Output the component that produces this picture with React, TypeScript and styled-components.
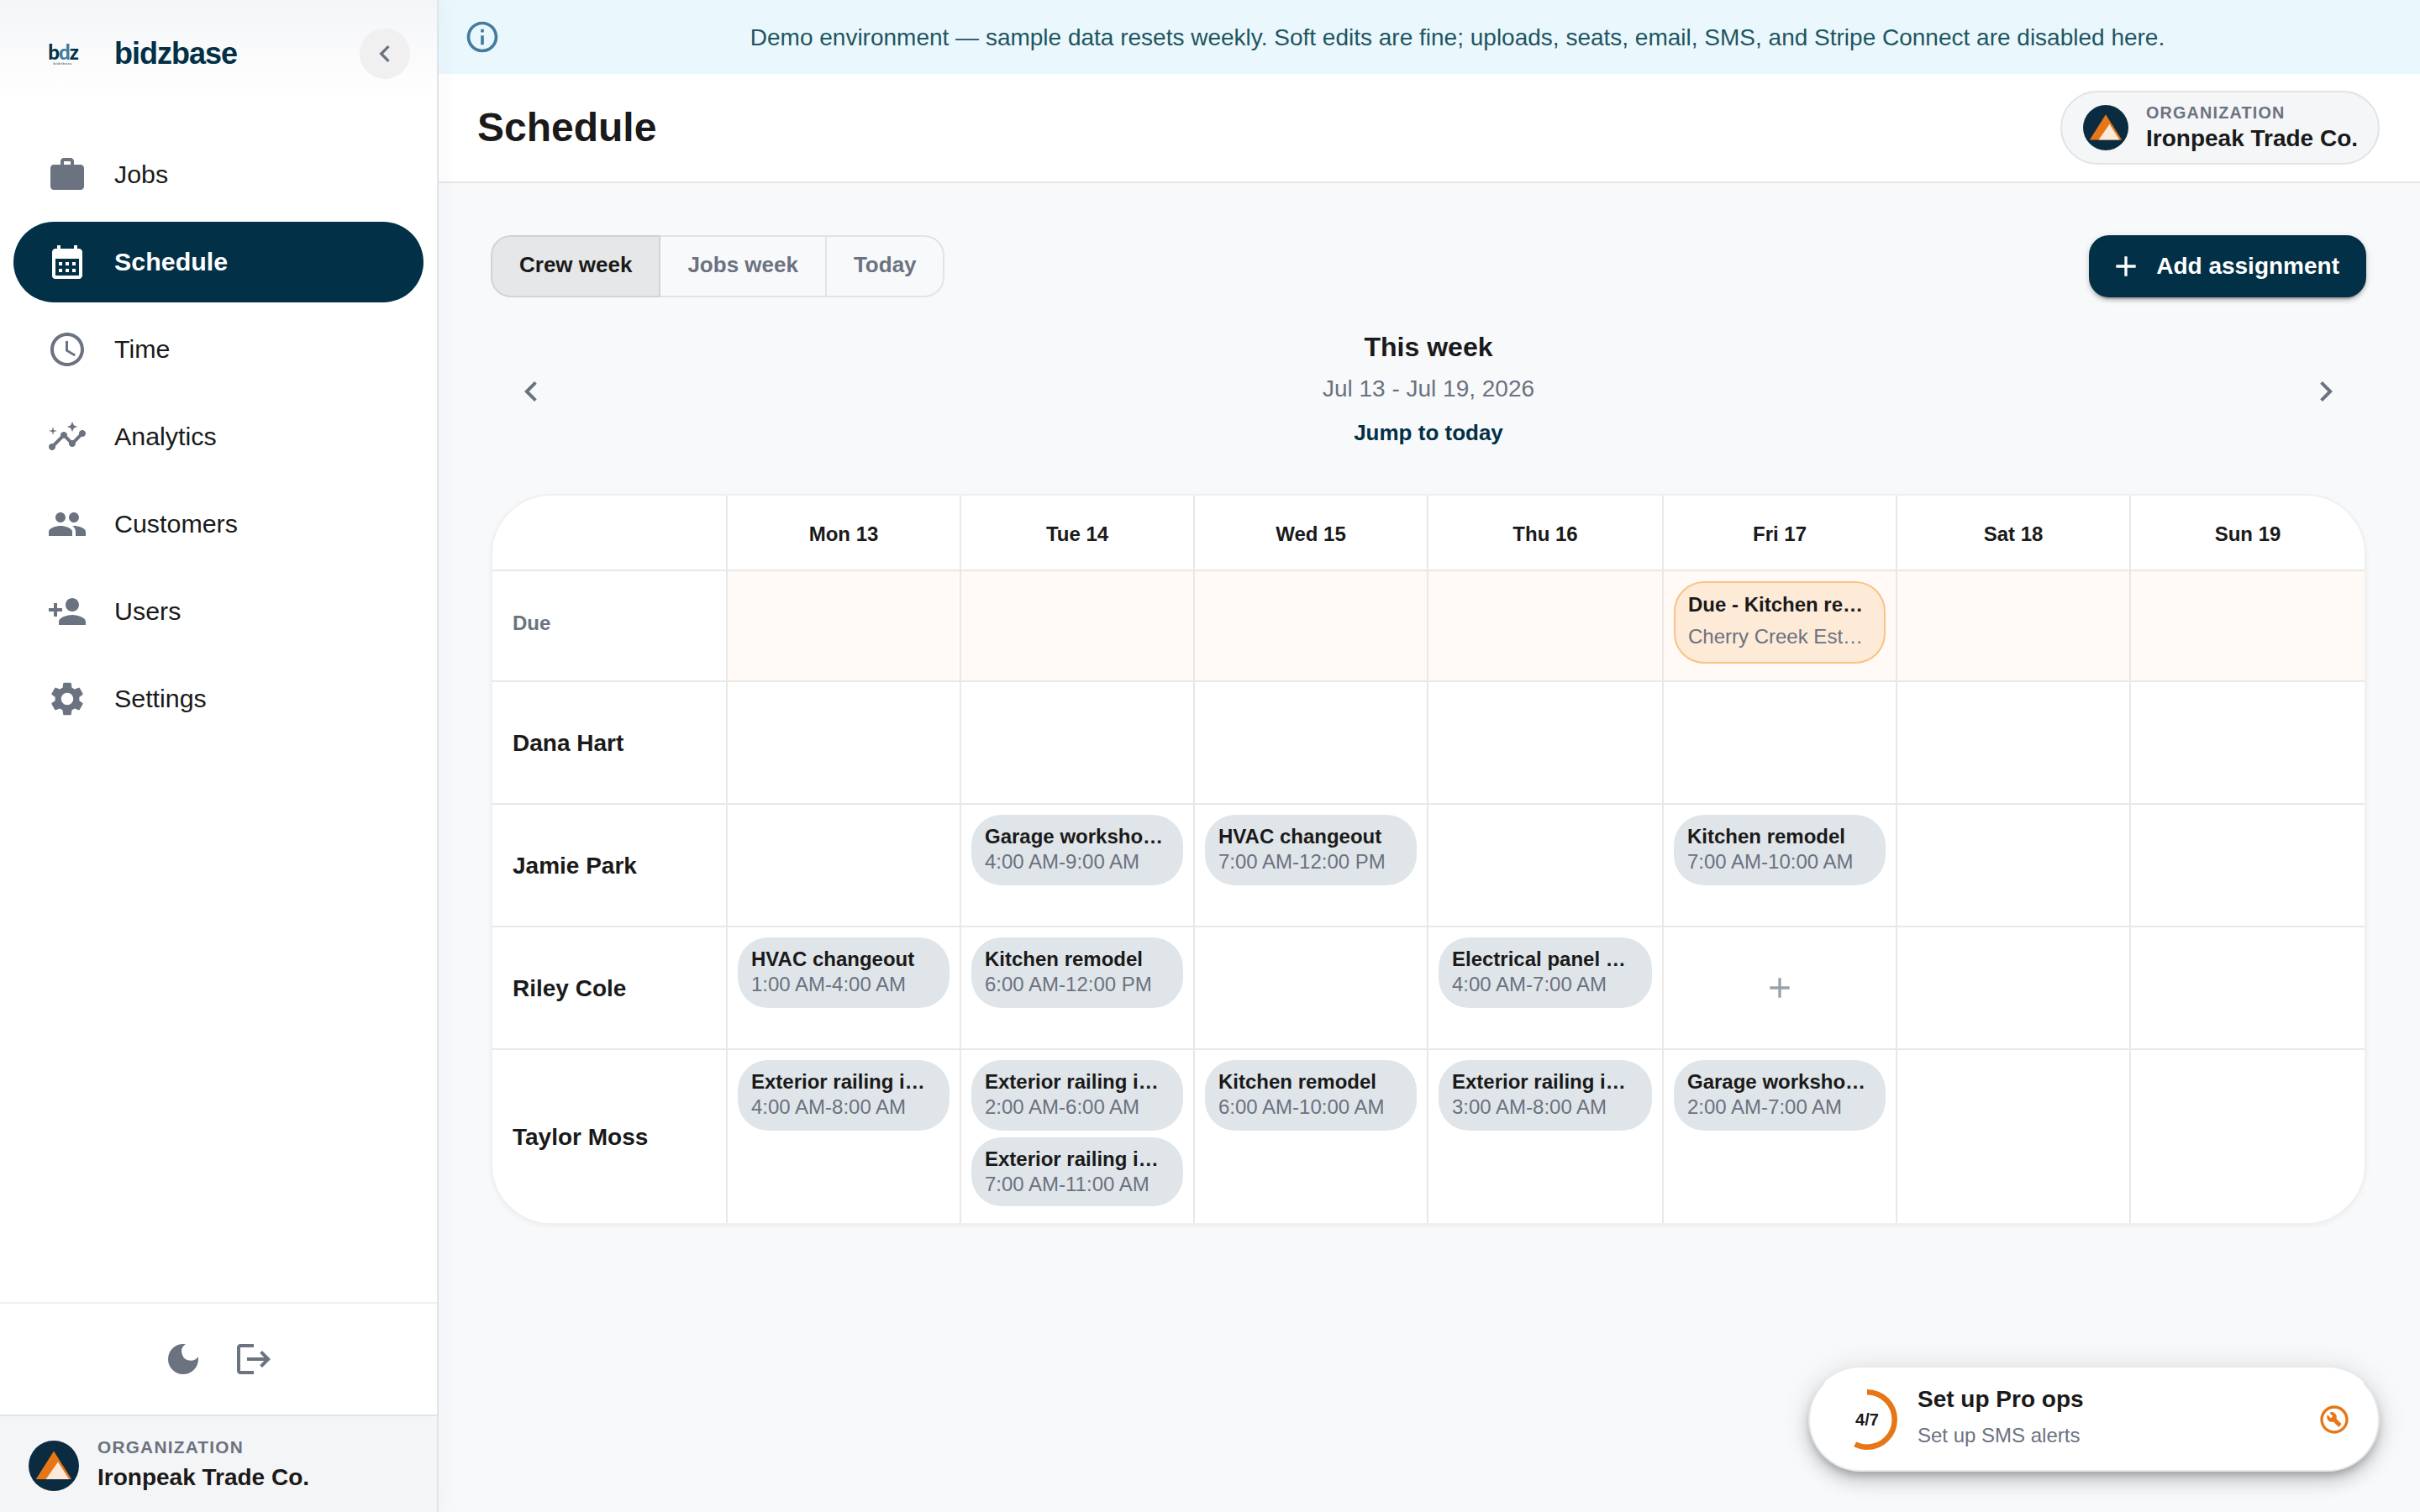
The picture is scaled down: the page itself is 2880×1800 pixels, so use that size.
import React from "react";
import styled, { createGlobalStyle, css } from "styled-components";
import {
  MdAdd,
  MdCalendarMonth,
  MdChevronLeft,
  MdChevronRight,
  MdDarkMode,
  MdInsights,
  MdOutlineBuildCircle,
  MdPeople,
  MdPersonAdd,
  MdSettings,
  MdWork,
} from "react-icons/md";

const colors = {
  primary: "#023047",
  text: "#1a1a1a",
  muted: "#6b7280",
  accent: "#e67616",
  border: "#e0e4e8",
  line: "#e8e8e8",
  page: "#f8f9fb",
  chip: "#e0e5e9",
};

const GlobalStyle = createGlobalStyle`
  *, *::before, *::after {
    box-sizing: border-box;
  }
  body {
    margin: 0;
    background: ${colors.page};
    color: ${colors.text};
    font-family: "Liberation Sans", Arial, sans-serif;
    font-size: 28px;
    line-height: 1;
  }
  button {
    font: inherit;
    color: inherit;
    background: none;
    border: 0;
    padding: 0;
  }
  svg {
    display: block;
    flex: none;
  }
`;

const Layout = styled.div`
  display: flex;
  width: 2880px;
  height: 1800px;
  overflow: hidden;
`;

/* ---------- sidebar ---------- */

const Sidebar = styled.aside`
  display: flex;
  flex-direction: column;
  flex: none;
  width: 522px;
  border-right: 2px solid ${colors.border};
  background: #fff;
  box-shadow: 4px 0 24px rgba(2, 48, 71, 0.04);
  z-index: 1;
`;

const Brand = styled.div`
  display: flex;
  align-items: center;
  height: 128px;
  padding: 0 32px 0 54px;
  background: linear-gradient(180deg, #f4f5f7 0%, #fff 92%);
`;

const BrandMark = styled.div`
  display: flex;
  flex-direction: column;
  align-items: center;
  width: 42px;
  margin-right: 40px;
  font-family: Lato, sans-serif;
  color: ${colors.primary};
`;

const BrandLetters = styled.span`
  font-size: 24px;
  font-weight: 900;
  line-height: 22px;
  letter-spacing: -1px;
  em {
    font-style: normal;
    color: #457b9d;
  }
`;

const BrandCaption = styled.span`
  font-size: 4.5px;
  line-height: 5px;
  letter-spacing: 0.7px;
`;

const BrandName = styled.span`
  flex: 1;
  font-size: 36px;
  font-weight: 700;
  letter-spacing: -1px;
  color: ${colors.primary};
`;

const CollapseButton = styled.button`
  display: flex;
  align-items: center;
  justify-content: center;
  width: 60px;
  height: 60px;
  border-radius: 50%;
  background: #f0f0f1;
  color: ${colors.muted};
  font-size: 40px;
`;

const Nav = styled.nav`
  display: flex;
  flex-direction: column;
  gap: 8px;
  flex: 1;
  padding: 32px 16px;
`;

const NavItem = styled.a<{ $active?: boolean }>`
  display: flex;
  align-items: center;
  gap: 32px;
  height: 96px;
  padding: 0 40px;
  border-radius: 48px;
  font-size: 30.4px;
  color: ${colors.text};
  svg {
    font-size: 48px;
    color: ${colors.muted};
  }
  ${(props) =>
    props.$active &&
    css`
      background: ${colors.primary};
      color: #fff;
      font-weight: 700;
      svg {
        color: #fff;
      }
    `}
`;

const NavLabel = styled.span`
  padding-bottom: 2px;
`;

const SidebarActions = styled.div`
  display: flex;
  align-items: center;
  justify-content: center;
  gap: 36px;
  height: 134px;
  border-top: 2px solid #f0f0f0;
  color: ${colors.muted};
  font-size: 48px;
`;

const SidebarOrg = styled.div`
  display: flex;
  align-items: center;
  gap: 22px;
  height: 116px;
  padding: 4px 34px 0;
  border-top: 2px solid ${colors.border};
  background: #f4f5f6;
`;

const OrgText = styled.div<{ $lift?: number }>`
  display: flex;
  flex-direction: column;
  padding-bottom: ${(props) => props.$lift || 0}px;
`;

const OrgLabel = styled.span<{ $size: number }>`
  font-size: ${(props) => props.$size}px;
  font-weight: 700;
  letter-spacing: 0.06em;
  color: ${colors.muted};
`;

const OrgName = styled.span<{ $gap: number }>`
  margin-top: ${(props) => props.$gap}px;
  font-size: 28px;
  font-weight: 700;
  white-space: nowrap;
`;

/* ---------- top area ---------- */

const Main = styled.main`
  display: flex;
  flex-direction: column;
  flex: 1;
  min-width: 0;
`;

const Banner = styled.div`
  display: flex;
  align-items: center;
  height: 88px;
  padding: 0 32px 0 30px;
  background: #eaf8fd;
  color: #1f5561;
`;

const BannerText = styled.p`
  flex: 1;
  margin: 0;
  padding: 2px 0 0 25px;
  text-align: center;
  font-size: 28px;
`;

const Header = styled.header`
  display: flex;
  align-items: center;
  justify-content: space-between;
  height: 130px;
  padding: 0 48px 0 46px;
  border-bottom: 2px solid ${colors.line};
  background: #fff;
`;

const PageTitle = styled.h1`
  margin: 0;
  font-size: 48px;
  font-weight: 700;
`;

const OrgChip = styled.div`
  display: flex;
  align-items: center;
  gap: 21px;
  width: 380px;
  height: 88px;
  padding: 0 24px 0 25px;
  border: 2px solid ${colors.border};
  border-radius: 44px;
  background: #f4f6f7;
`;

const Content = styled.section`
  padding: 62px 64px 0 62px;
`;

const Toolbar = styled.div`
  display: flex;
  align-items: center;
  justify-content: space-between;
`;

const Tabs = styled.div`
  display: flex;
  height: 74px;
`;

const Tab = styled.button<{ $active?: boolean }>`
  padding: 0 32px 5px;
  border: 2px solid ${(props) => (props.$active ? "#d0d4d7" : colors.border)};
  background: ${(props) => (props.$active ? "#e6e7e8" : "transparent")};
  color: ${(props) => (props.$active ? colors.text : colors.muted)};
  font-size: 26px;
  font-weight: 700;
  &:not(:first-child) {
    border-left: 0;
  }
  &:first-child {
    border-radius: 24px 0 0 24px;
  }
  &:last-child {
    padding-right: 31px;
    border-radius: 0 24px 24px 0;
  }
`;

const AddButton = styled.button`
  display: flex;
  align-items: center;
  gap: 16px;
  height: 74px;
  padding: 0 32px 0 24px;
  border-radius: 24px;
  background: ${colors.primary};
  color: #fff;
  font-size: 28px;
  font-weight: 700;
  box-shadow: 0 6px 2px -4px rgba(0, 0, 0, 0.2),
    0 4px 4px 0 rgba(0, 0, 0, 0.14), 0 2px 10px 0 rgba(0, 0, 0, 0.12);
  svg {
    font-size: 40px;
  }
`;

const WeekNav = styled.div`
  display: flex;
  align-items: center;
  justify-content: space-between;
  height: 156px;
  margin: 34px 0 44px;
  padding: 0 24px;
  color: ${colors.muted};
  font-size: 48px;
`;

const WeekInfo = styled.div`
  display: flex;
  flex-direction: column;
  align-items: center;
  padding-bottom: 2px;
`;

const WeekTitle = styled.h2`
  margin: 0;
  font-size: 32px;
  line-height: 48px;
  font-weight: 700;
  color: ${colors.text};
`;

const WeekRange = styled.span`
  font-size: 28px;
  line-height: 52px;
`;

const JumpLink = styled.button`
  color: ${colors.primary};
  font-size: 26px;
  line-height: 52px;
  font-weight: 700;
`;

/* ---------- week board ---------- */

const Board = styled.div`
  overflow: hidden;
  border: 2px solid #f0f0f0;
  border-radius: 72px;
  background: #fff;
  box-shadow: 0 2px 6px rgba(0, 0, 0, 0.05);
`;

const Row = styled.div<{ $height: number }>`
  display: grid;
  grid-template-columns: 280px 278px 278px 278px 280px 278px 278px 278px;
  height: ${(props) => props.$height}px;
  &:not(:last-child) {
    border-bottom: 2px solid ${colors.line};
  }
`;

const Cell = styled.div<{ $tint?: boolean }>`
  display: flex;
  flex-direction: column;
  gap: 8px;
  min-width: 0;
  padding: 12px;
  background: ${(props) => (props.$tint ? "#fffaf5" : "transparent")};
  &:not(:last-child) {
    border-right: 2px solid ${colors.line};
  }
`;

const DayCell = styled(Cell)`
  align-items: center;
  justify-content: center;
  padding: 4px 0 0;
  font-size: 24px;
  font-weight: 700;
`;

const RowLabel = styled(Cell)<{ $muted?: boolean }>`
  justify-content: center;
  padding: ${(props) => (props.$muted ? "0 24px 6px" : "2px 24px 0")};
  font-size: ${(props) => (props.$muted ? 24 : 28)}px;
  font-weight: 700;
  color: ${(props) => (props.$muted ? colors.muted : colors.text)};
`;

const EventCard = styled.div`
  height: 84px;
  padding: 11px 16px 0;
  border-radius: 36px;
  background: ${colors.chip};
  font-size: 24px;
  line-height: 30px;
  white-space: nowrap;
  & + & {
    height: 82px;
  }
`;

const DueCard = styled(EventCard)`
  height: 98px;
  padding: 7px 15px 0;
  border: 2px solid #fbc188;
  background: #fdead7;
  line-height: 38px;
`;

const EventTitle = styled.div`
  font-weight: 700;
`;

const EventMeta = styled.div`
  color: ${colors.muted};
`;

const AddSlot = styled.button`
  display: flex;
  align-items: center;
  justify-content: center;
  flex: 1;
  color: #99a2a8;
  font-size: 40px;
`;

/* ---------- setup widget, floats over the page ---------- */

const SetupWidget = styled.div`
  position: absolute;
  top: 1628px;
  left: 2152px;
  display: flex;
  align-items: center;
  width: 680px;
  height: 124px;
  padding: 0 32px;
  border: 2px solid #e6e8ea;
  border-top-color: #fff;
  border-radius: 62px;
  background: #fff;
  box-shadow: 0 6px 10px -2px rgba(0, 0, 0, 0.2),
    0 12px 20px 0 rgba(0, 0, 0, 0.14), 0 2px 36px 0 rgba(0, 0, 0, 0.12);
`;

const Ring = styled.div`
  display: grid;
  place-items: center;
  width: 72px;
  height: 72px;
  > * {
    grid-area: 1 / 1;
  }
`;

const RingText = styled.span`
  font-size: 20px;
  font-weight: 700;
`;

const SetupText = styled.div`
  display: flex;
  flex-direction: column;
  flex: 1;
  margin-left: 24px;
  padding-bottom: 6px;
`;

const SetupTitle = styled.span`
  font-size: 28px;
  line-height: 44px;
  font-weight: 700;
`;

const SetupStep = styled.span`
  font-size: 24px;
  line-height: 42px;
  color: ${colors.muted};
`;

/* ---------- drawings ---------- */

const PeakLogo = ({ size }: { size: number }) => (
  <svg width={size} height={size} viewBox="0 0 60 60">
    <circle cx="30" cy="30" r="30" fill="#0b2c40" />
    <path d="M30 12.6 51.2 46H8.8z" fill={colors.accent} />
    <path d="M35 25.4 48.3 46H20.6z" fill="#fbe9dc" />
  </svg>
);

const ClockIcon = () => (
  <svg width="1em" height="1em" viewBox="0 0 24 24" fill="currentColor">
    <path d="M11.99 2C6.47 2 2 6.48 2 12s4.47 10 9.99 10C17.52 22 22 17.52 22 12S17.52 2 11.99 2zM12 20c-4.42 0-8-3.58-8-8s3.58-8 8-8 8 3.58 8 8-3.58 8-8 8z" />
    <path d="M12.5 7H11v6l5.25 3.15.75-1.23-4.5-2.67z" />
  </svg>
);

const LogoutIcon = () => (
  <svg width="1em" height="1em" viewBox="0 0 24 24" fill="currentColor">
    <path d="M17 7l-1.41 1.41L18.17 11H8v2h10.17l-2.58 2.58L17 17l5-5zM4 5h8V3H4c-1.1 0-2 .9-2 2v14c0 1.1.9 2 2 2h8v-2H4V5z" />
  </svg>
);

const InfoIcon = () => (
  <svg width="44" height="44" viewBox="0 0 24 24" fill="#457b9d">
    <path d="M11 7h2v2h-2zm0 4h2v6h-2zm1-9C6.48 2 2 6.48 2 12s4.48 10 10 10 10-4.48 10-10S17.52 2 12 2zm0 18c-4.41 0-8-3.59-8-8s3.59-8 8-8 8 3.59 8 8-3.59 8-8 8z" />
  </svg>
);

const ProgressRing = ({ done, total }: { done: number; total: number }) => {
  const length = 2 * Math.PI * 32.75;
  return (
    <svg width="72" height="72" viewBox="0 0 72 72">
      <circle
        cx="36"
        cy="36"
        r="32.75"
        fill="none"
        stroke={colors.accent}
        strokeWidth="6.5"
        strokeDasharray={`${(length * done) / total} ${length}`}
        transform="rotate(-90 36 36)"
      />
    </svg>
  );
};

/* ---------- data ---------- */

const navItems = [
  { label: "Jobs", icon: <MdWork /> },
  { label: "Schedule", icon: <MdCalendarMonth />, active: true },
  { label: "Time", icon: <ClockIcon /> },
  { label: "Analytics", icon: <MdInsights /> },
  { label: "Customers", icon: <MdPeople /> },
  { label: "Users", icon: <MdPersonAdd /> },
  { label: "Settings", icon: <MdSettings /> },
];

const days = ["Mon 13", "Tue 14", "Wed 15", "Thu 16", "Fri 17", "Sat 18", "Sun 19"];

interface IShift {
  title: string;
  time: string;
}

interface ICrewRow {
  name: string;
  height: number;
  shifts: { [day: number]: IShift[] };
  addSlot?: number;
}

const crew: ICrewRow[] = [
  { name: "Dana Hart", height: 146, shifts: {} },
  {
    name: "Jamie Park",
    height: 146,
    shifts: {
      1: [{ title: "Garage worksho…", time: "4:00 AM-9:00 AM" }],
      2: [{ title: "HVAC changeout", time: "7:00 AM-12:00 PM" }],
      4: [{ title: "Kitchen remodel", time: "7:00 AM-10:00 AM" }],
    },
  },
  {
    name: "Riley Cole",
    height: 146,
    addSlot: 4,
    shifts: {
      0: [{ title: "HVAC changeout", time: "1:00 AM-4:00 AM" }],
      1: [{ title: "Kitchen remodel", time: "6:00 AM-12:00 PM" }],
      3: [{ title: "Electrical panel …", time: "4:00 AM-7:00 AM" }],
    },
  },
  {
    name: "Taylor Moss",
    height: 206,
    shifts: {
      0: [{ title: "Exterior railing i…", time: "4:00 AM-8:00 AM" }],
      1: [
        { title: "Exterior railing i…", time: "2:00 AM-6:00 AM" },
        { title: "Exterior railing i…", time: "7:00 AM-11:00 AM" },
      ],
      2: [{ title: "Kitchen remodel", time: "6:00 AM-10:00 AM" }],
      3: [{ title: "Exterior railing i…", time: "3:00 AM-8:00 AM" }],
      4: [{ title: "Garage worksho…", time: "2:00 AM-7:00 AM" }],
    },
  },
];

const WeekBoard = () => (
  <Board>
    <Row $height={90}>
      <Cell />
      {days.map((day) => (
        <DayCell key={day}>{day}</DayCell>
      ))}
    </Row>
    <Row $height={132}>
      <RowLabel $muted>Due</RowLabel>
      {days.map((day, index) => (
        <Cell key={day} $tint>
          {index === 4 && (
            <DueCard>
              <EventTitle>Due - Kitchen re…</EventTitle>
              <EventMeta>Cherry Creek Est…</EventMeta>
            </DueCard>
          )}
        </Cell>
      ))}
    </Row>
    {crew.map((member) => (
      <Row key={member.name} $height={member.height}>
        <RowLabel>{member.name}</RowLabel>
        {days.map((day, index) => (
          <Cell key={day}>
            {(member.shifts[index] || []).map((shift) => (
              <EventCard key={shift.time}>
                <EventTitle>{shift.title}</EventTitle>
                <EventMeta>{shift.time}</EventMeta>
              </EventCard>
            ))}
            {member.addSlot === index && (
              <AddSlot>
                <MdAdd />
              </AddSlot>
            )}
          </Cell>
        ))}
      </Row>
    ))}
  </Board>
);

const App = () => {
  return (
    <Layout>
      <GlobalStyle />
      <Sidebar>
        <Brand>
          <BrandMark>
            <BrandLetters>
              b<em>d</em>z
            </BrandLetters>
            <BrandCaption>bidzbase</BrandCaption>
          </BrandMark>
          <BrandName>bidzbase</BrandName>
          <CollapseButton>
            <MdChevronLeft />
          </CollapseButton>
        </Brand>
        <Nav>
          {navItems.map((item) => (
            <NavItem key={item.label} $active={item.active}>
              {item.icon}
              <NavLabel>{item.label}</NavLabel>
            </NavItem>
          ))}
        </Nav>
        <SidebarActions>
          <MdDarkMode />
          <LogoutIcon />
        </SidebarActions>
        <SidebarOrg>
          <PeakLogo size={60} />
          <OrgText $lift={4}>
            <OrgLabel $size={20.8}>ORGANIZATION</OrgLabel>
            <OrgName $gap={12}>Ironpeak Trade Co.</OrgName>
          </OrgText>
        </SidebarOrg>
      </Sidebar>
      <Main>
        <Banner>
          <InfoIcon />
          <BannerText>
            Demo environment — sample data resets weekly. Soft edits are fine;
            uploads, seats, email, SMS, and Stripe Connect are disabled here.
          </BannerText>
        </Banner>
        <Header>
          <PageTitle>Schedule</PageTitle>
          <OrgChip>
            <PeakLogo size={54} />
            <OrgText>
              <OrgLabel $size={19.8}>ORGANIZATION</OrgLabel>
              <OrgName $gap={6}>Ironpeak Trade Co.</OrgName>
            </OrgText>
          </OrgChip>
        </Header>
        <Content>
          <Toolbar>
            <Tabs>
              <Tab $active>Crew week</Tab>
              <Tab>Jobs week</Tab>
              <Tab>Today</Tab>
            </Tabs>
            <AddButton>
              <MdAdd />
              Add assignment
            </AddButton>
          </Toolbar>
          <WeekNav>
            <MdChevronLeft />
            <WeekInfo>
              <WeekTitle>This week</WeekTitle>
              <WeekRange>Jul 13 - Jul 19, 2026</WeekRange>
              <JumpLink>Jump to today</JumpLink>
            </WeekInfo>
            <MdChevronRight />
          </WeekNav>
          <WeekBoard />
        </Content>
      </Main>
      <SetupWidget>
        <Ring>
          <ProgressRing done={4} total={7} />
          <RingText>4/7</RingText>
        </Ring>
        <SetupText>
          <SetupTitle>Set up Pro ops</SetupTitle>
          <SetupStep>Set up SMS alerts</SetupStep>
        </SetupText>
        <MdOutlineBuildCircle size={40} color={colors.accent} />
      </SetupWidget>
    </Layout>
  );
};

export default App;
